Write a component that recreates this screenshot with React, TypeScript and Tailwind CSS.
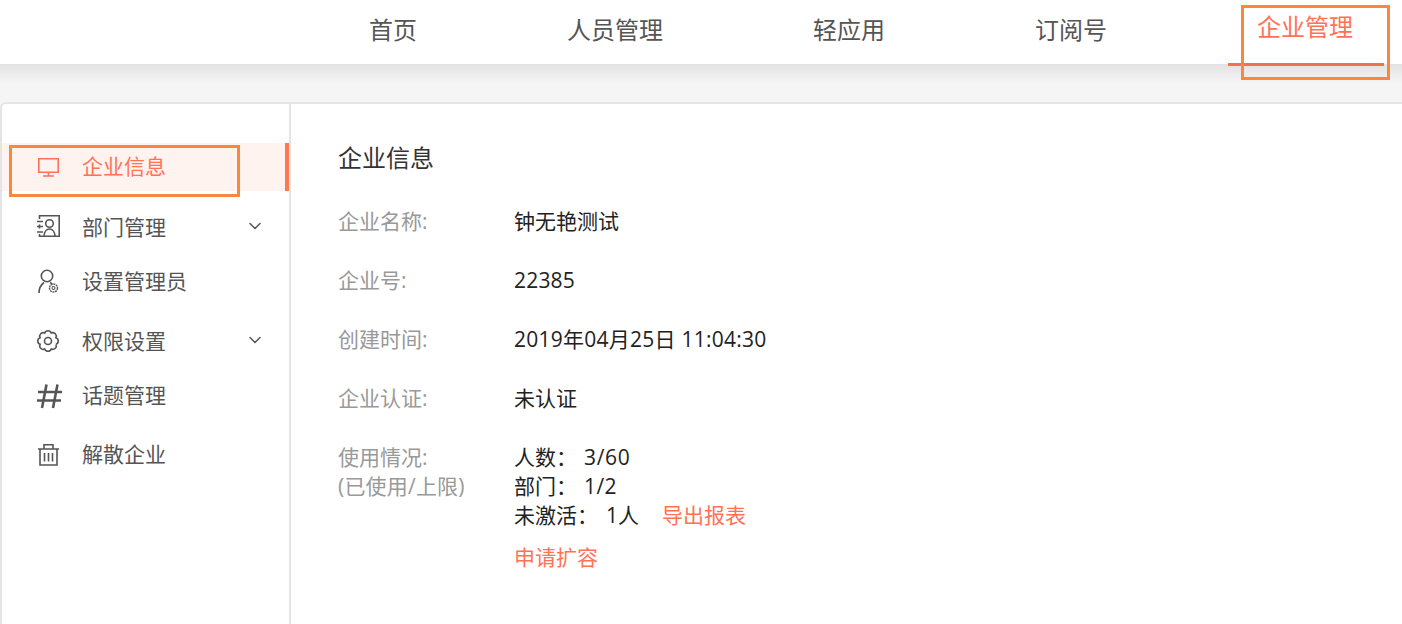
import React from "react";
import { ChevronDown } from "lucide-react";

const FONT = "font-['Open_Sans','Noto_Sans_CJK_SC',sans-serif]";

const navItems = ["首页", "人员管理", "轻应用", "订阅号"];

const MonitorIcon = () => (
  <svg width="24" height="24" viewBox="0 0 24 24" fill="none" stroke="currentColor" strokeWidth="1.6" className="shrink-0">
    <path d="M2.800 3.800h19.400v13.400H2.800z" />
    <path d="M12.500 17.500v3M7 21h11" />
  </svg>
);

const DeptIcon = () => (
  <svg width="26" height="26" viewBox="0 0 26 26" fill="none" stroke="#555" strokeWidth="1.6" className="-mt-[3px] shrink-0">
    <path d="M3.500 5V1.800h19.700v20.400H3.500V20M3.500 14.500v-4" />
    <path d="M1 7.500h6M1 12.500h6M1 18h6" />
    <circle cx="13.500" cy="9.500" r="3.800" />
    <path d="M8 22c.3-4 2.500-7 5.500-7s5.200 3 5.500 7" />
  </svg>
);

const AdminIcon = () => (
  <svg width="26" height="26" viewBox="0 0 26 26" fill="none" stroke="#555" strokeWidth="1.6" className="shrink-0">
    <circle cx="11" cy="7" r="5.700" />
    <path d="M3 24c0-4.500 1.800-8 5-10.500M14 13.500c.8.4 1.500.9 2 1.500" />
    <circle cx="17.500" cy="19" r="4" strokeWidth="1.400" strokeDasharray="2 .6" />
    <circle cx="17.500" cy="19" r="1.500" strokeWidth="1.100" />
  </svg>
);

// scalloped outline, 8 lobes around the centre
const gearPoints = Array.from({ length: 9 }, (_, i) => {
  const a = ((i * 45 + 22.5) * Math.PI) / 180;
  return `${(12 + 8.6 * Math.cos(a)).toFixed(2)} ${(12 + 8.6 * Math.sin(a)).toFixed(2)}`;
});
const gearPath = gearPoints.map((p, i) => (i === 0 ? `M${p}` : `A3.500 3.500 0 0 1 ${p}`)).join(" ");

const GearIcon = () => (
  <svg width="24" height="24" viewBox="0 0 24 24" fill="none" stroke="#555" strokeWidth="1.6" className="-mt-[2px] shrink-0">
    <path d={gearPath} />
    <circle cx="12" cy="12" r="3.500" />
  </svg>
);

const HashIcon = () => (
  <svg width="26" height="26" viewBox="0 0 26 26" fill="none" stroke="#555" strokeWidth="2.600" className="shrink-0">
    <path d="M10.500 1.500 6 25M21.500 1.500 17 25M2 9h24M1 17.500h24" />
  </svg>
);

const TrashIcon = () => (
  <svg width="26" height="26" viewBox="0 0 26 26" fill="none" stroke="#555" strokeWidth="1.6" className="shrink-0">
    <path d="M2 7h21M8 7V2.800h9V7M4 7v16h17V7" />
    <path d="M8.500 11v8.500M12.500 11v8.500M16.500 11v8.500" />
  </svg>
);

const sideItems = [
  { label: "部门管理", icon: <DeptIcon />, arrow: true, gap: "mt-0", indent: "ml-[20px]" },
  { label: "设置管理员", icon: <AdminIcon />, gap: "mt-0", indent: "ml-[20px]" },
  { label: "权限设置", icon: <GearIcon />, arrow: true, gap: "mt-[6px]", indent: "ml-[22px]" },
  { label: "话题管理", icon: <HashIcon />, gap: "mt-0", indent: "ml-[20px]" },
  { label: "解散企业", icon: <TrashIcon />, gap: "mt-[5px]", indent: "ml-[20px]" },
];

const infoRows = [
  { label: "企业名称:", value: "钟无艳测试", track: "" },
  { label: "企业号:", value: "22385", track: "tracking-[0.2px]" },
  { label: "创建时间:", value: "2019年04月25日 11:04:30", track: "tracking-[0.25px]" },
  { label: "企业认证:", value: "未认证", track: "" },
];

export default function App() {
  return (
    <div className={`relative h-[624px] w-[1402px] overflow-hidden bg-[#f5f5f5] ${FONT}`}>
      <header className="relative flex h-[64px] bg-white pl-[339px]">
        <nav className="flex gap-[90px]">
          {navItems.map((item) => (
            <a key={item} className="flex h-[60px] items-center px-[30px] text-2xl text-[#555]">
              {item}
            </a>
          ))}
          <a className="ml-px h-[66px] border-b-[3px] border-[#f3704f] pl-[29px] pr-[31px] pt-[9px] text-2xl leading-[36px] text-[#ff7256]">
            企业管理
          </a>
        </nav>
      </header>
      <div className="h-[38px] bg-gradient-to-b from-[#e2e2e2] to-[#f5f5f5] to-[50%]" />

      <main className="flex h-[522px] rounded-tl-[6px] border-t-2 border-l-2 border-[#e5e5e5] bg-white">
        <aside className="w-[289px] shrink-0 border-r-2 border-[#e5e5e5] pt-[39px]">
          <div className="flex h-[48px] items-center border-r-[4px] border-[#ff7850] bg-[#fff3ef] pl-[34px] text-[21px] text-[#ff7256]">
            <MonitorIcon />
            <span className="ml-[22px]">企业信息</span>
          </div>
          <ul className="mt-[10px]">
            {sideItems.map((item) => (
              <li key={item.label} className={`flex h-[54px] items-center pl-[34px] pr-[24px] text-[21px] text-[#555] ${item.gap}`}>
                {item.icon}
                <span className={`flex-1 ${item.indent}`}>{item.label}</span>
                {item.arrow && <ChevronDown size={20} strokeWidth={1.8} color="#555" className="-mt-[5px]" />}
              </li>
            ))}
          </ul>
        </aside>

        <section className="flex-1 pl-[47px] pt-[36px] text-[21px]">
          <h1 className="text-2xl leading-[36px] text-[#333]">企业信息</h1>
          <div className="mt-[31px] flex flex-col">
            {infoRows.map((row) => (
              <div key={row.label} className="flex h-[59px] leading-[29px]">
                <span className="w-[176px] text-[#999]">{row.label}</span>
                <span className={`text-[#222] ${row.track}`}>{row.value}</span>
              </div>
            ))}
            <div className="flex leading-[29px]">
              <div className="w-[176px] text-[#999]">
                <p>使用情况:</p>
                <p className="tracking-[0.2px]">(已使用/上限)</p>
              </div>
              <div className="text-[#222]">
                <p>
                  人数：<span className="ml-[7px] tracking-[0.7px]">3/60</span>
                </p>
                <p>
                  部门：<span className="ml-[7px] tracking-[0.4px]">1/2</span>
                </p>
                <p>
                  未激活：<span className="ml-[8px]">1人</span>
                  <a className="ml-[23px] text-[#ff7256]">导出报表</a>
                </p>
                <a className="mt-[13px] block text-[#ff7256]">申请扩容</a>
              </div>
            </div>
          </div>
        </section>
      </main>

      {/* orange annotation boxes drawn over the screenshot */}
      <div className="absolute left-[1241px] top-[5px] h-[75px] w-[149px] border-[3px] border-[#fb873e]" />
      <div className="absolute left-[9px] top-[145px] h-[52px] w-[231px] border-[3px] border-[#fb873e]" />
    </div>
  );
}
